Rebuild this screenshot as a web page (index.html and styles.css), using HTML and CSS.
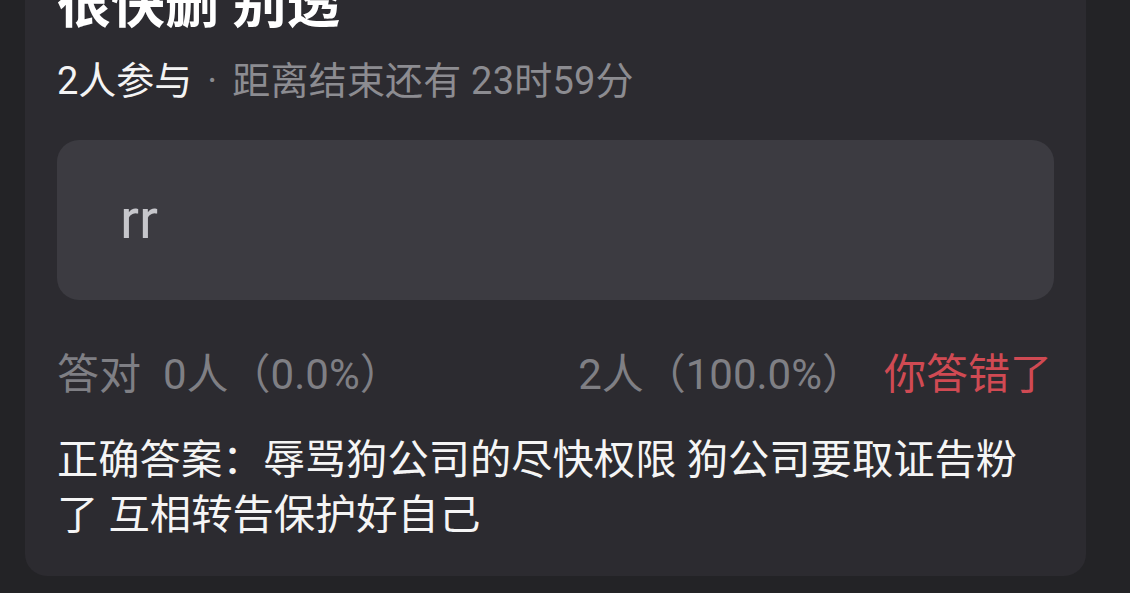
FILE: index.html
```html
<!DOCTYPE html>
<html lang="zh-CN">
<head>
<meta charset="utf-8">
<title>答题卡片</title>
<link rel="stylesheet" href="styles.css">
</head>
<body>
<div class="page">
  <div class="card">
    <h1 class="title">很快删 别透</h1>
    <div class="meta">
      <span class="count">2人参与</span><span class="dot">·</span><span class="remain">距离结束还有 23时59分</span>
    </div>
    <div class="option">
      <span class="option-text">rr</span>
    </div>
    <div class="stats">
      <span class="right-count"><span class="label">答对</span>0人（0.0%）</span>
      <span class="wrong-group"><span class="wrong-count">2人（100.0%）</span><span class="wrong-tag">你答错了</span></span>
    </div>
    <p class="answer">正确答案：辱骂狗公司的尽快权限 狗公司要取证告粉了 互相转告保护好自己</p>
  </div>
</div>
</body>
</html>
```

FILE: styles.css
```css
html, body {
  margin: 0;
  padding: 0;
  background: #232326;
  height: 100%;
  overflow: hidden;
}

.page {
  padding-left: 25px;
  font-family: Roboto, "Noto Sans CJK SC", sans-serif;
}

.card {
  width: 1061px;
  box-sizing: border-box;
  margin-top: -40px;
  padding: 15px 32px 33px 32px;
  background: #2c2b30;
  border-radius: 22px;
}

.title {
  margin: 0;
  font-size: 54px;
  line-height: 60px;
  font-weight: 700;
  color: #ffffff;
}

.meta {
  margin-top: 21px;
  font-size: 38px;
  line-height: 50px;
  white-space: nowrap;
  display: flex;
}

.count {
  color: #f4f4f4;
}

.dot {
  color: #8a8a8f;
  margin: 0 15px;
}

.remain {
  color: #8c8c91;
  letter-spacing: 0.2px;
}

.option {
  margin-top: 34px;
  height: 160px;
  background: #3c3b41;
  border-radius: 22px;
  display: flex;
  align-items: center;
  padding-left: 63px;
  padding-bottom: 3px;
  box-sizing: border-box;
}

.option-text {
  font-size: 56px;
  line-height: 64px;
  color: #c6c6cb;
}

.stats {
  margin-top: 47px;
  display: flex;
  justify-content: space-between;
  font-size: 42px;
  line-height: 56px;
  color: #7f7f84;
  white-space: nowrap;
}

.label {
  margin-right: 22px;
}

.wrong-group {
  display: flex;
  margin-right: 2px;
}

.wrong-tag {
  color: #d04a53;
  margin-left: 20px;
}

.answer {
  margin: 30px 0 0 0;
  font-size: 41.3px;
  line-height: 55px;
  font-weight: 400;
  color: #f5f5f5;
}
```
